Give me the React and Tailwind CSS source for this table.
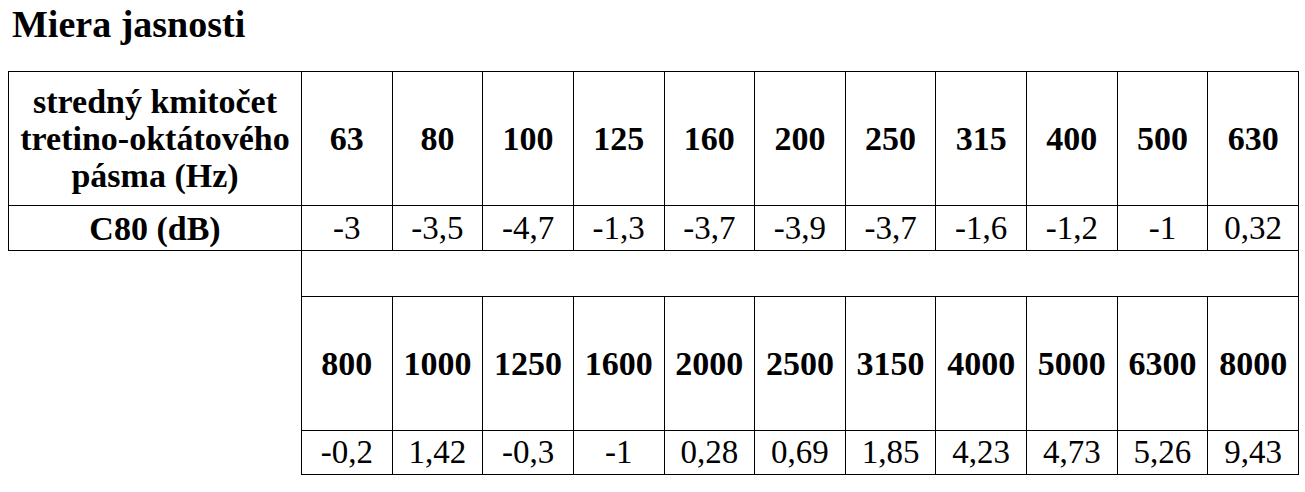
import React from "react";

const f1 = ["63", "80", "100", "125", "160", "200", "250", "315", "400", "500", "630"];
const v1 = ["-3", "-3,5", "-4,7", "-1,3", "-3,7", "-3,9", "-3,7", "-1,6", "-1,2", "-1", "0,32"];
const f2 = ["800", "1000", "1250", "1600", "2000", "2500", "3150", "4000", "5000", "6300", "8000"];
const v2 = ["-0,2", "1,42", "-0,3", "-1", "0,28", "0,69", "1,85", "4,23", "4,73", "5,26", "9,43"];

export default function App() {
  return (
    <div className="font-['Liberation_Serif'] w-[1305px] h-[492px] bg-white text-black overflow-hidden">
      <h1 className="pl-[12px] pt-[4px] text-[38px] font-bold leading-[41px]">Miera jasnosti</h1>
      <div className="pl-[8px] mt-[26px]">
        <table className="table-fixed border-collapse w-[1291px]">
          <colgroup>
            <col className="w-[293px]" />
            {f1.map((x) => (
              <col key={x} />
            ))}
          </colgroup>
          <tbody>
            <tr>
              <td className="border border-black h-[134px] text-center align-middle text-[34px] font-bold leading-[37px]">
                stredný kmitočet
                <br />
                tretino-oktátového
                <br />
                pásma (Hz)
              </td>
              {f1.map((x) => (
                <td key={x} className="border border-black text-center align-middle text-[34px] font-bold leading-[37px]">
                  {x}
                </td>
              ))}
            </tr>
            <tr>
              <td className="border border-black h-[45px] text-center align-middle text-[34px] font-bold leading-[37px]">
                C80 (dB)
              </td>
              {v1.map((x, i) => (
                <td key={i} className="border border-black text-center align-middle text-[33px] leading-[37px]">
                  {x}
                </td>
              ))}
            </tr>
          </tbody>
        </table>
        <table className="table-fixed border-collapse w-[998px] ml-[293px]">
          <tbody>
            <tr>
              <td colSpan={11} className="border border-black border-t-0 h-[45px]"></td>
            </tr>
            <tr>
              {f2.map((x) => (
                <td key={x} className="border border-black h-[134px] text-center align-middle text-[34px] font-bold leading-[37px]">
                  {x}
                </td>
              ))}
            </tr>
            <tr>
              {v2.map((x, i) => (
                <td key={i} className="border border-black h-[44px] text-center align-middle text-[33px] leading-[37px]">
                  {x}
                </td>
              ))}
            </tr>
          </tbody>
        </table>
      </div>
    </div>
  );
}
